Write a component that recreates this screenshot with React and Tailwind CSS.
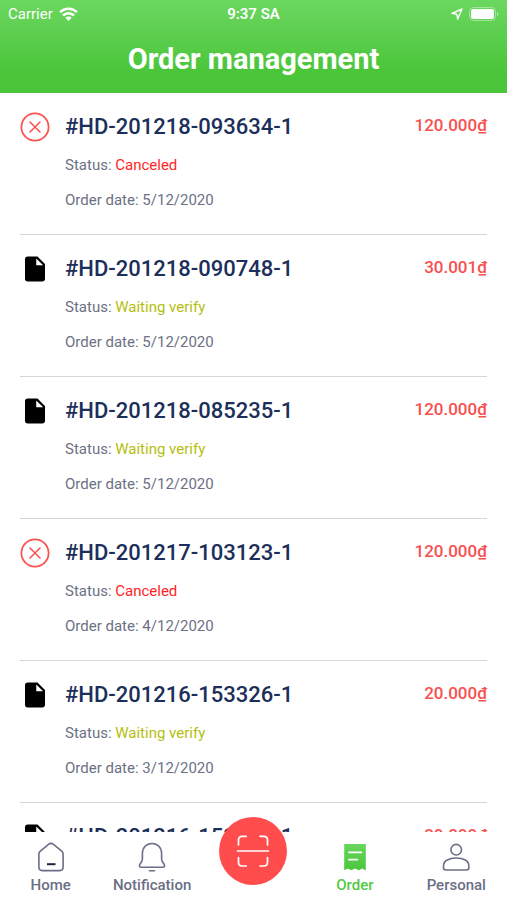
import { MdInsertDriveFile } from "react-icons/md";

const orders = [
  { id: "#HD-201218-093634-1", status: "canceled", date: "5/12/2020", price: "120.000" },
  { id: "#HD-201218-090748-1", status: "waiting", date: "5/12/2020", price: "30.001" },
  { id: "#HD-201218-085235-1", status: "waiting", date: "5/12/2020", price: "120.000" },
  { id: "#HD-201217-103123-1", status: "canceled", date: "4/12/2020", price: "120.000" },
  { id: "#HD-201216-153326-1", status: "waiting", date: "3/12/2020", price: "20.000" },
  { id: "#HD-201216-152951-1", status: "waiting", date: "3/12/2020", price: "20.000" },
];

const statuses = {
  canceled: { label: "Canceled", className: "text-[#ff1f1f]", icon: CancelIcon },
  waiting: { label: "Waiting verify", className: "text-[#b5be10]", icon: FileIcon },
};

function CancelIcon() {
  return (
    <svg viewBox="0 0 30 30" className="size-[30px]" fill="none" stroke="#fb5252" strokeLinecap="round" aria-hidden="true">
      <circle cx="15" cy="15" r="13.6" strokeWidth="1.8" />
      <path d="M10 10l10 10M20 10L10 20" strokeWidth="1.6" />
    </svg>
  );
}

function FileIcon() {
  return <MdInsertDriveFile className="size-[30px] text-black" aria-hidden="true" />;
}

function HomeIcon() {
  return (
    <svg viewBox="0 0 30 30" className="size-[30px]" fill="none" stroke="currentColor" strokeWidth="1.6" strokeLinecap="round" strokeLinejoin="round" aria-hidden="true">
      <path d="M2.9 12c0-1.200.5-2.100 1.400-2.900l8.500-6.900c1.300-1 3.100-1 4.400 0l8.500 6.900c.9.800 1.400 1.700 1.400 2.900v13.300c0 2-1.400 3.300-3.400 3.300H6.300c-2 0-3.400-1.300-3.400-3.300z" />
      <path d="M11 22.200h8.500" stroke="#1c2340" strokeWidth="2" strokeLinecap="butt" />
    </svg>
  );
}

function BellIcon() {
  return (
    <svg viewBox="0 0 30 30" className="size-[30px]" fill="none" stroke="currentColor" strokeWidth="1.6" strokeLinecap="round" strokeLinejoin="round" aria-hidden="true">
      <path d="M5.400 11.400C5.400 5.500 9.500 1.500 15 1.500s9.600 4 9.600 9.900v5.300c0 1.500.4 2.600 1.300 3.800l1.200 1.700c1 1.500.2 3.100-1.500 3.100H4.400c-1.700 0-2.500-1.600-1.500-3.100l1.200-1.700c.9-1.200 1.300-2.300 1.300-3.800z" />
      <path d="M12.500 28.800h5" />
    </svg>
  );
}

function ReceiptIcon() {
  return (
    <svg viewBox="0 0 30 30" className="size-[30px]" aria-hidden="true">
      <defs>
        <linearGradient id="receipt" x1="0" y1="0" x2="0" y2="1">
          <stop offset="0" stopColor="#68d65b" />
          <stop offset="1" stopColor="#4bc63c" />
        </linearGradient>
      </defs>
      <path d="M4.200 2h21.600v26.300l-1.800-.9-1.800-.9-3.400 1.800-3.800-1.800-3.700 1.800-3.400-1.800-3.700 1.800z" fill="url(#receipt)" />
      <path d="M9 10.300h12.500M9 17.600h8.500" stroke="#fff" strokeWidth="1.700" strokeLinecap="round" />
    </svg>
  );
}

function PersonIcon() {
  return (
    <svg viewBox="0 0 30 30" className="size-[30px]" fill="none" stroke="currentColor" strokeWidth="1.600" strokeLinejoin="round" aria-hidden="true">
      <circle cx="15.200" cy="7.700" r="5.300" />
      <path d="M2.500 24c0-5.200 5.500-8 12.700-8s12.700 2.800 12.700 8v1.600c0 1.400-1 2.400-2.400 2.400H4.900c-1.400 0-2.400-1-2.400-2.400z" />
    </svg>
  );
}

function ScanIcon() {
  return (
    <svg viewBox="0 0 34 34" className="size-[34px]" fill="none" stroke="#fff" strokeWidth="1.700" strokeLinecap="round" aria-hidden="true">
      <path d="M1.500 17h31M2.500 11V6c0-2.300 1.400-3.700 3.700-3.700h4M24 2.300h3.800c2.300 0 3.700 1.400 3.700 3.700v5M2.500 23.500v4.800c0 2.300 1.400 3.700 3.700 3.700h4M31.500 23.500v4.800c0 2.300-1.400 3.700-3.700 3.700H24" />
    </svg>
  );
}

function StatusBar() {
  return (
    <div className="grid grid-cols-3 items-center px-2 pt-1 text-[15px] leading-5">
      <div className="flex items-center gap-1.5">
        <span>Carrier</span>
        <svg viewBox="0 0 19 14" className="h-3.5 w-[19px]" fill="none" stroke="#fff" strokeWidth="2.500" aria-hidden="true">
          <path d="M1 5.200a12.200 12.200 0 0 1 17 0M4 8.500a7.900 7.900 0 0 1 11 0" />
          <path d="M9.500 14L6.300 10.700a4.600 4.600 0 0 1 6.400 0z" fill="#fff" stroke="none" />
        </svg>
      </div>
      <span className="text-center font-semibold">9:37 SA</span>
      <div className="flex items-center justify-end gap-1.5">
        <svg viewBox="0 0 12 12" className="size-3" fill="none" stroke="#fff" strokeWidth="1.400" strokeLinejoin="round" aria-hidden="true">
          <path d="M11 1L1 5.300l4.800.9.900 4.800z" />
        </svg>
        <svg viewBox="0 0 30 14" className="h-3.5 w-[30px]" aria-hidden="true">
          <rect x=".5" y=".5" width="26" height="13" rx="4" fill="none" stroke="#fff" strokeOpacity=".4" />
          <rect x="2" y="2" width="23" height="10" rx="2.500" fill="#fff" />
          <path d="M28 5v4c1.800-.6 1.800-3.400 0-4z" fill="#fff" fillOpacity=".5" />
        </svg>
      </div>
    </div>
  );
}

function OrderRow({ order }) {
  const status = statuses[order.status];
  const Icon = status.icon;

  return (
    <li className="flex border-b border-[#d4d6d8] pt-[21px] pb-6">
      <div className="-my-0.5 w-[45px] shrink-0">
        <Icon />
      </div>
      <div className="flex flex-1 flex-col gap-[15px] text-[15px] leading-5 text-[#6c7184]">
        <div className="flex justify-between">
          <h2 className="text-[22px] leading-[26px] font-medium text-[#1c2f5a]">{order.id}</h2>
          <span className="text-[17px] leading-[22px] font-medium text-[#f84f4f]">{order.price}₫</span>
        </div>
        <p>
          Status: <span className={status.className}>{status.label}</span>
        </p>
        <p>Order date: {order.date}</p>
      </div>
    </li>
  );
}

function Tab({ label, icon: Icon, active }) {
  return (
    <a
      href="#"
      aria-current={active ? "page" : undefined}
      className={`flex flex-col items-center gap-[3px] pt-2.5 text-[15px] leading-5 font-medium ${active ? "text-[#52c943]" : "text-[#6a6f85]"}`}
    >
      <Icon />
      {label}
    </a>
  );
}

export default function App() {
  return (
    <div className="flex h-dvh flex-col bg-white font-['Roboto',sans-serif]">
      <header className="bg-linear-to-b from-[#6bd75f] to-[#4bc63b] to-75% pb-4 text-white">
        <StatusBar />
        <h1 className="pt-[17px] text-center text-[29px] leading-9 font-bold">Order management</h1>
      </header>

      <main className="min-h-0 flex-1 overflow-hidden">
        <ul className="px-5">
          {orders.map((order) => (
            <OrderRow key={order.id} order={order} />
          ))}
        </ul>
      </main>

      <nav className="grid h-17 shrink-0 grid-cols-5 bg-white">
        <Tab label="Home" icon={HomeIcon} />
        <Tab label="Notification" icon={BellIcon} />
        <div className="flex justify-center">
          <button
            type="button"
            aria-label="Scan code"
            className="relative -top-[15px] flex size-17 items-center justify-center rounded-full bg-[#ff4d4d]"
          >
            <ScanIcon />
          </button>
        </div>
        <Tab label="Order" icon={ReceiptIcon} active />
        <Tab label="Personal" icon={PersonIcon} />
      </nav>
    </div>
  );
}
